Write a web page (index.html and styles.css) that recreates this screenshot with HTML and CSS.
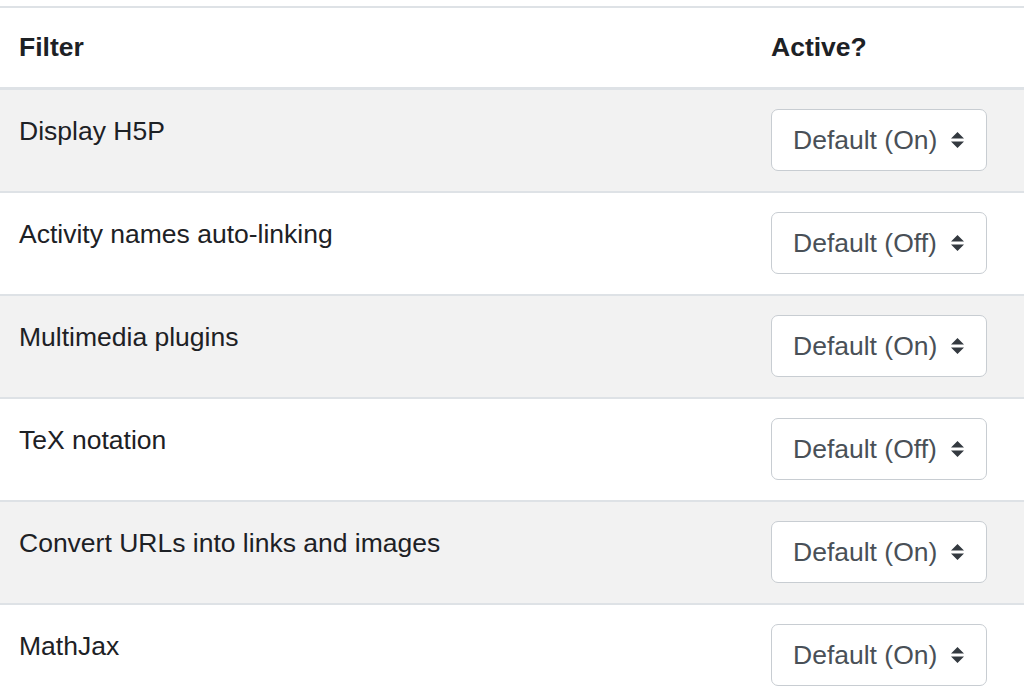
FILE: index.html
```html
<!DOCTYPE html>
<html lang="en">
<head>
    <meta charset="UTF-8">
    <meta name="viewport" content="width=device-width, initial-scale=1.0">
    <title>Filter settings</title>
    <link rel="stylesheet" href="styles.css">
</head>
<body>
    <table class="filters">
        <thead>
            <tr>
                <th class="col-name">Filter</th>
                <th class="col-active">Active?</th>
            </tr>
        </thead>
        <tbody>
            <tr>
                <td class="name">Display H5P</td>
                <td><div class="select"><span>Default (On)</span><svg class="caret" viewBox="0 0 13 16"><path d="M6.5 0 L13 6.5 H0 Z M0 9.5 H13 L6.5 16 Z"/></svg></div></td>
            </tr>
            <tr>
                <td class="name">Activity names auto-linking</td>
                <td><div class="select"><span>Default (Off)</span><svg class="caret" viewBox="0 0 13 16"><path d="M6.5 0 L13 6.5 H0 Z M0 9.5 H13 L6.5 16 Z"/></svg></div></td>
            </tr>
            <tr>
                <td class="name">Multimedia plugins</td>
                <td><div class="select"><span>Default (On)</span><svg class="caret" viewBox="0 0 13 16"><path d="M6.5 0 L13 6.5 H0 Z M0 9.5 H13 L6.5 16 Z"/></svg></div></td>
            </tr>
            <tr>
                <td class="name">TeX notation</td>
                <td><div class="select"><span>Default (Off)</span><svg class="caret" viewBox="0 0 13 16"><path d="M6.5 0 L13 6.5 H0 Z M0 9.5 H13 L6.5 16 Z"/></svg></div></td>
            </tr>
            <tr>
                <td class="name">Convert URLs into links and images</td>
                <td><div class="select"><span>Default (On)</span><svg class="caret" viewBox="0 0 13 16"><path d="M6.5 0 L13 6.5 H0 Z M0 9.5 H13 L6.5 16 Z"/></svg></div></td>
            </tr>
            <tr>
                <td class="name">MathJax</td>
                <td><div class="select"><span>Default (On)</span><svg class="caret" viewBox="0 0 13 16"><path d="M6.5 0 L13 6.5 H0 Z M0 9.5 H13 L6.5 16 Z"/></svg></div></td>
            </tr>
        </tbody>
    </table>
</body>
</html>
```

FILE: styles.css
```css
body {
    margin: 0;
    background-color: #fff;
    color: #1d2125;
    font-family: "Liberation Sans", Arial, sans-serif;
    font-size: 26.5px;
    line-height: 39px;
    overflow: hidden;
}
.filters {
    width: 1024px;
    margin-top: 6px;
    border-collapse: collapse;
    border-top: 2px solid #dee2e6;
}
.filters th,
.filters td {
    padding: 19.5px 19px 19.5px;
    text-align: left;
    vertical-align: top;
}
.filters td.name {
    padding-top: 22px;
}
.filters th {
    font-weight: bold;
    padding-bottom: 20px;
    border-bottom: 3px solid #dee2e6;
}
.col-name {
    width: 714px;
}
.filters tbody tr {
    border-top: 2px solid #dee2e6;
}
.filters thead + tbody tr:first-child {
    border-top: none;
}
.filters tbody tr:nth-child(odd) {
    background-color: #f2f2f2;
}
.select {
    display: inline-flex;
    align-items: center;
    gap: 14px;
    height: 62px;
    box-sizing: border-box;
    padding: 0 22px 0 21px;
    border: 1.5px solid #c8cdd2;
    border-radius: 7px;
    background-color: #fff;
    color: #495057;
}
.caret {
    width: 13px;
    height: 16px;
    fill: #343a40;
}
```
